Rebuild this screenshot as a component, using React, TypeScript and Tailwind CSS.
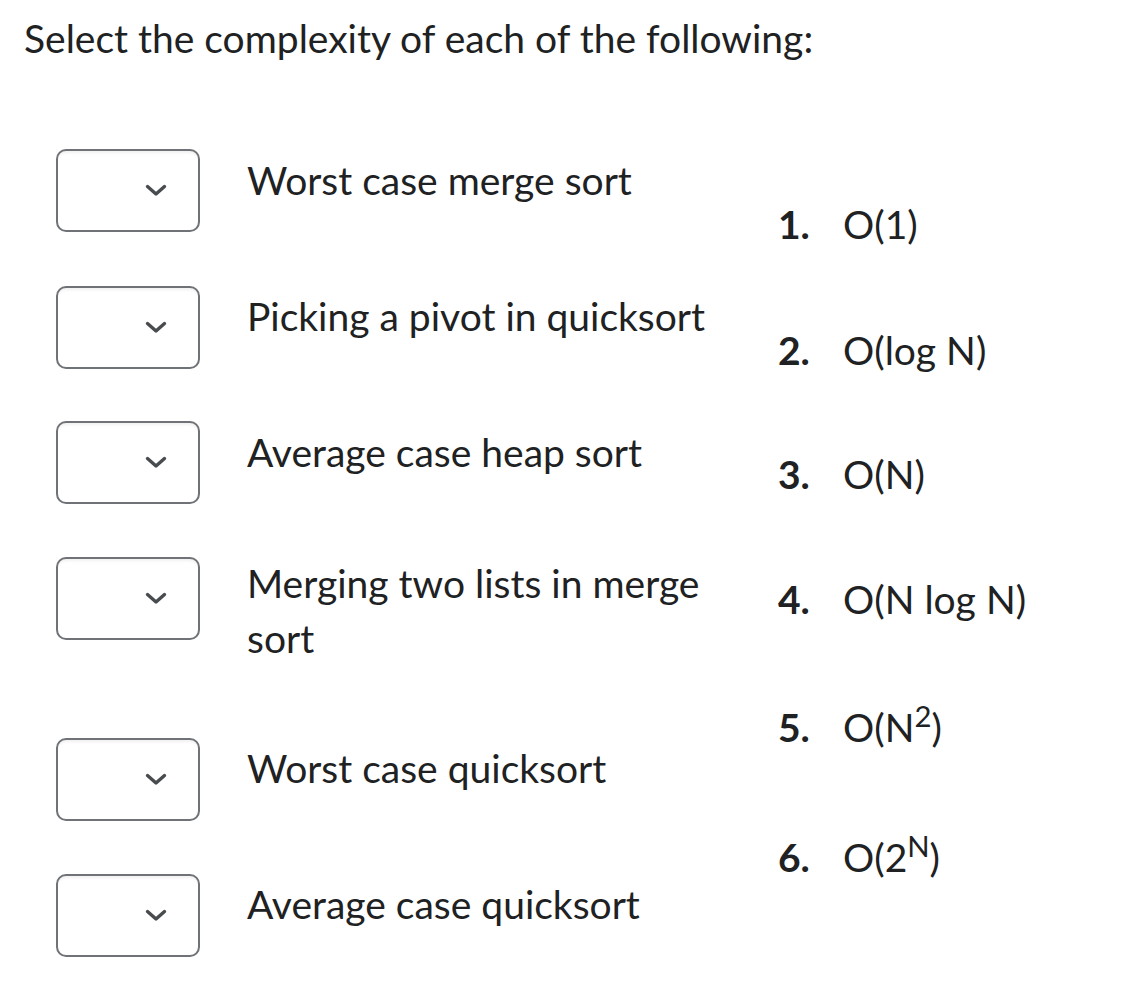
import React from "react";

const rows = [
  { label: "Worst case merge sort", mt: "mt-0", labelMt: "mt-[4px]", boxMt: "mt-0" },
  { label: "Picking a pivot in quicksort", mt: "mt-[54px]", labelMt: "mt-[3px]", boxMt: "mt-0" },
  { label: "Average case heap sort", mt: "mt-[52px]", labelMt: "mt-[4px]", boxMt: "mt-0" },
  { label: "Merging two lists in merge sort", mt: "mt-[52px]", labelMt: "mt-0", boxMt: "mt-[1px]" },
  { label: "Worst case quicksort", mt: "mt-[72px]", labelMt: "mt-[3px]", boxMt: "mt-0" },
  { label: "Average case quicksort", mt: "mt-[53px]", labelMt: "mt-[3px]", boxMt: "mt-0" },
];

const answers: { num: string; text: React.ReactNode; mt: string }[] = [
  { num: "1.", text: "O(1)", mt: "mt-0" },
  { num: "2.", text: "O(log N)", mt: "mt-[71px]" },
  { num: "3.", text: "O(N)", mt: "mt-[69px]" },
  { num: "4.", text: "O(N log N)", mt: "mt-[70px]" },
  {
    num: "5.",
    text: (
      <>
        O(N<sup>2</sup>)
      </>
    ),
    mt: "mt-[73px]",
  },
  {
    num: "6.",
    text: (
      <>
        O(2<sup>N</sup>)
      </>
    ),
    mt: "mt-[75px]",
  },
];

function SelectBox({ className }: { className?: string }) {
  return (
    <div
      className={`relative flex h-[83px] w-[144px] shrink-0 items-center justify-end rounded-[10px] border-2 border-[#6f7377] bg-white pr-[31px] shadow-[inset_0_4px_3px_-2px_rgba(0,0,0,0.06)] ${className ?? ""}`}
    >
      <svg width="22" height="13" viewBox="0 0 22 13" fill="none">
        <path
          d="M2.5 2.5 L11 10 L19.5 2.5"
          stroke="#494c4e"
          strokeWidth="3.4"
          strokeLinecap="round"
          strokeLinejoin="round"
        />
      </svg>
    </div>
  );
}

export default function App() {
  return (
    <div
      className="min-h-[996px] w-full bg-white text-[#202122]"
      style={{ fontFamily: "Lato, 'Noto Sans', sans-serif" }}
    >
      <h1 className="pl-[24px] pt-[11px] text-[39px] font-normal leading-[55px]">
        Select the complexity of each of the following:
      </h1>

      <div className="mt-[83px] flex pl-[56px]">
        {/* questions */}
        <div className="flex w-[665px] flex-col">
          {rows.map((r) => (
            <div key={r.label} className={`flex items-start gap-[47px] ${r.mt}`}>
              <SelectBox className={r.boxMt} />
              <div className={`w-[470px] text-[39px] leading-[55px] ${r.labelMt}`}>{r.label}</div>
            </div>
          ))}
        </div>

        {/* answer list */}
        <ol className="ml-[57px] flex flex-col pt-[48px]">
          {answers.map((a) => (
            <li key={a.num} className={`flex text-[39px] leading-[55px] ${a.mt}`}>
              <span className="w-[65px] font-bold">{a.num}</span>
              <span>{a.text}</span>
            </li>
          ))}
        </ol>
      </div>
    </div>
  );
}
